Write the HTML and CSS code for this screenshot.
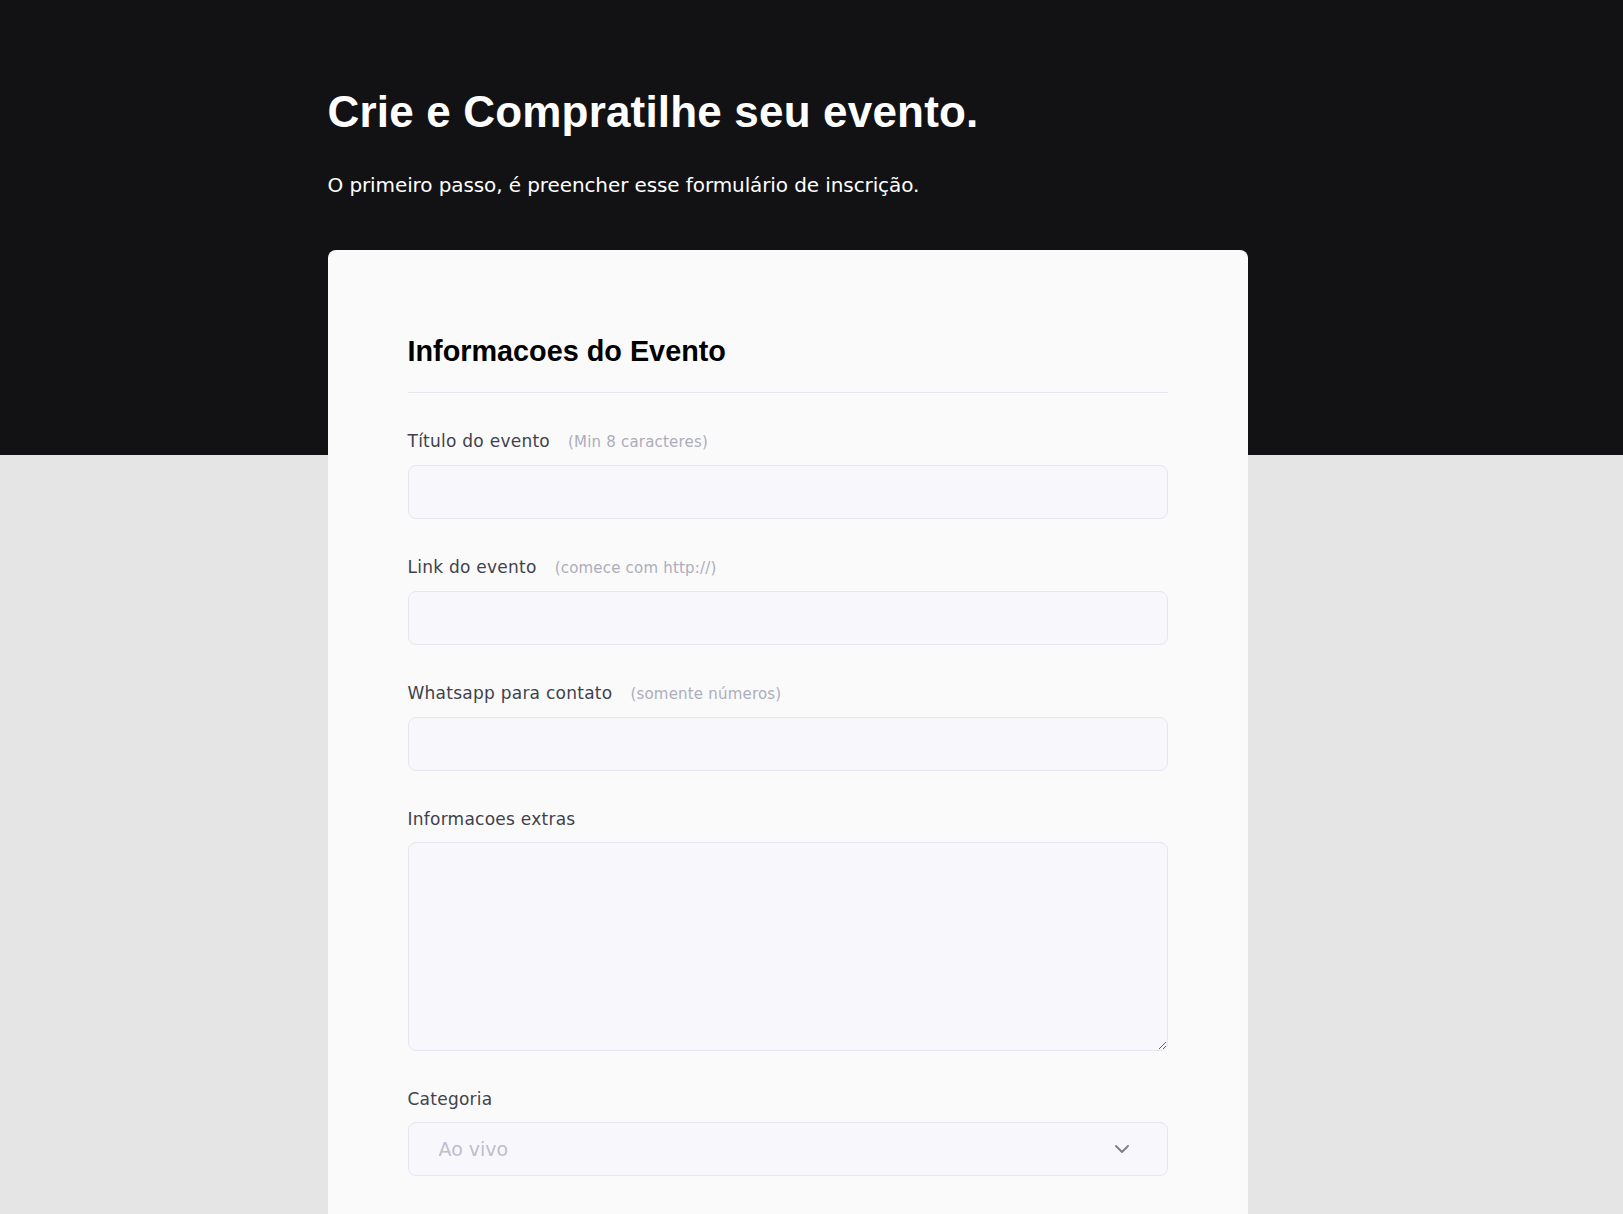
FILE: index.html
```html
<!DOCTYPE html>
<html lang="pt-BR">
<head>
<meta charset="utf-8">
<title>Crie e Compartilhe seu evento</title>
<link rel="stylesheet" href="styles.css">
</head>
<body>
<div class="page">
  <header class="hero">
    <h1 class="hero-title">Crie e Compratilhe seu evento.</h1>
    <p class="hero-sub">O primeiro passo, é preencher esse formulário de inscrição.</p>
  </header>
  <main class="card">
    <form class="form">
      <h2 class="section-title">Informacoes do Evento</h2>
      <div class="field">
        <label class="label" for="title">Título do evento<span class="hint">(Min 8 caracteres)</span></label>
        <input class="input" id="title" type="text">
      </div>
      <div class="field">
        <label class="label" for="link">Link do evento<span class="hint">(comece com http://)</span></label>
        <input class="input" id="link" type="text">
      </div>
      <div class="field">
        <label class="label" for="whats">Whatsapp para contato<span class="hint">(somente números)</span></label>
        <input class="input" id="whats" type="text">
      </div>
      <div class="field">
        <label class="label" for="extra">Informacoes extras</label>
        <textarea class="input textarea" id="extra"></textarea>
      </div>
      <div class="field">
        <label class="label" for="cat">Categoria</label>
        <div class="select-wrap">
          <select class="input select" id="cat">
            <option>Ao vivo</option>
            <option>Presencial</option>
          </select>
          <svg class="chevron" width="14" height="8" viewBox="0 0 14 8" aria-hidden="true"><path d="M1 1l6 6 6-6" fill="none" stroke="#7c7c8a" stroke-width="1.8" stroke-linecap="round" stroke-linejoin="round"/></svg>
        </div>
      </div>
    </form>
  </main>
</div>
</body>
</html>
```
FILE: styles.css
```css
* { box-sizing: border-box; }
html, body { margin: 0; padding: 0; }
body {
  min-height: 1214px;
  background: linear-gradient(to bottom, #121214 0, #121214 455px, #e5e5e5 455px, #e5e5e5 100%);
  font-family: "DejaVu Sans", "Open Sans", sans-serif;
  color: #41414d;
}
.page {
  width: 920px;
  margin-left: calc(50% - 484px);
}
.hero {
  padding-top: 86px;
}
.hero-title {
  margin: 0;
  font-family: "Liberation Sans", Arial, sans-serif;
  font-weight: 700;
  font-size: 44px;
  line-height: 52.8px;
  letter-spacing: 0.18px;
  color: #ffffff;
}
.hero-sub {
  margin: 31px 0 50px;
  font-size: 20px;
  line-height: 30px;
  letter-spacing: -0.1px;
  color: #ffffff;
}
.card {
  background: #fafafa;
  border-radius: 8px;
  padding: 83px 80px 64px;
}
.form { margin: 0; }
.section-title {
  margin: 0;
  padding-bottom: 23px;
  border-bottom: 1px solid #e6e6f0;
  font-family: "Liberation Sans", Arial, sans-serif;
  font-weight: 700;
  font-size: 28.8px;
  line-height: 36px;
  color: #000000;
}
.field {
  display: flex;
  flex-direction: column;
  margin-top: 36px;
}
.label {
  font-size: 17px;
  line-height: 24px;
  letter-spacing: 0.25px;
  color: #41414d;
  margin-bottom: 11px;
}
.hint {
  margin-left: 18px;
  font-size: 15px;
  letter-spacing: 0.2px;
  color: #adadbb;
}
.input {
  display: block;
  width: 100%;
  height: 54px;
  margin: 0;
  border: 1px solid #e6e6f0;
  border-radius: 8px;
  background: #f8f8fc;
  font-family: inherit;
  font-size: 16px;
  color: #41414d;
  outline: none;
}
.textarea {
  height: 209px;
  resize: vertical;
}
.select-wrap {
  position: relative;
}
.select {
  -webkit-appearance: none;
  appearance: none;
  padding: 0 30px;
  font-size: 19px;
  color: #c1bccc;
}
.chevron {
  position: absolute;
  right: 39px;
  top: 23px;
  pointer-events: none;
}
```
